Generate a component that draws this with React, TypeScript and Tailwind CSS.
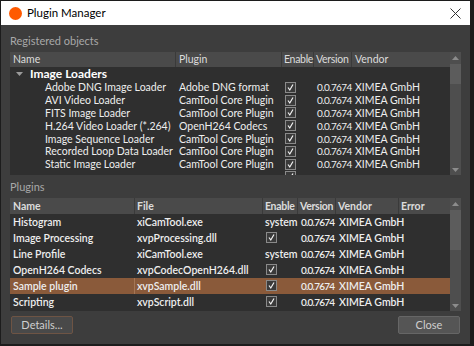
import React from 'react';

const loaders = [
  ['Adobe DNG Image Loader', 'Adobe DNG format'],
  ['AVI Video Loader', 'CamTool Core Plugin'],
  ['FITS Image Loader', 'CamTool Core Plugin'],
  ['H.264 Video Loader (*.264)', 'OpenH264 Codecs'],
  ['Image Sequence Loader', 'CamTool Core Plugin'],
  ['Recorded Loop Data Loader', 'CamTool Core Plugin'],
  ['Static Image Loader', 'CamTool Core Plugin'],
];

const plugins = [
  { name: 'Histogram', file: 'xiCamTool.exe', system: true },
  { name: 'Image Processing', file: 'xvpProcessing.dll', system: false },
  { name: 'Line Profile', file: 'xiCamTool.exe', system: true },
  { name: 'OpenH264 Codecs', file: 'xvpCodecOpenH264.dll', system: false },
  { name: 'Sample plugin', file: 'xvpSample.dll', system: false, selected: true },
  { name: 'Scripting', file: 'xvpScript.dll', system: false },
];

const Check = () => (
  <span className="flex h-[11px] w-[11px] items-center justify-center border border-[#8a8a8a] bg-[#3a3a3a]">
    <svg width="9" height="9" viewBox="0 0 9 9">
      <path d="M2 4.5 L3.8 7 L7 1.5" fill="none" stroke="#f2f2f2" strokeWidth="1.2" />
    </svg>
  </span>
);

const Scrollbar = ({ thumbTop, thumbH }: { thumbTop: number; thumbH: number }) => (
  <div className="relative w-[11px] shrink-0 bg-[#4e4e4e]">
    <div className="flex h-[11px] items-center justify-center">
      <svg width="7" height="4" viewBox="0 0 7 4"><path d="M0 4 L3.5 0 L7 4Z" fill="#8c8c8c" /></svg>
    </div>
    <div className="absolute left-0 right-0 bg-[#5c5c5c]" style={{ top: thumbTop, height: thumbH }} />
    <div className="absolute bottom-0 flex h-[11px] w-full items-center justify-center">
      <svg width="7" height="4" viewBox="0 0 7 4"><path d="M0 0 L3.5 4 L7 0Z" fill="#8c8c8c" /></svg>
    </div>
  </div>
);

const cols1 = 'grid grid-cols-[166px_106px_32px_38px_1fr] whitespace-nowrap';
const cols2 = 'grid grid-cols-[125px_128px_35px_38px_63px_1fr] whitespace-nowrap';

const App: React.FC = () => {
  return (
    <div
      className="flex h-[346px] w-[474px] flex-col overflow-hidden border-r-4 border-b-2 border-l border-t border-[#1c1c1c] bg-[#3d3d3d] text-[10.5px] text-[#eeeeee]"
      style={{ fontFamily: 'Lato, "Liberation Sans", sans-serif' }}
    >
      <div className="flex h-[24px] shrink-0 items-center bg-white pl-[8px] pr-[9px] text-[11.5px] text-black">
        <span className="h-[13px] w-[13px] rounded-full bg-[#ff5a00]" />
        <span className="ml-[5px]">Plugin Manager</span>
        <svg className="ml-auto" width="11" height="11" viewBox="0 0 11 11">
          <path d="M0.5 0.5 L10.5 10.5 M10.5 0.5 L0.5 10.5" stroke="#333" strokeWidth="1" />
        </svg>
      </div>

      <div className="flex flex-1 flex-col px-[9px]">
        <div className="h-[27px] pt-[8px] text-[11px] leading-[16px] text-[#a8a8a8]">Registered objects</div>
        <div className="flex h-[123px] bg-[#2f2f2f]">
          <div className="flex-1 overflow-hidden">
            <div className={`${cols1} h-[15px] bg-[#4a4a4a] text-[10.5px] leading-[15px] text-[#dcdcdc]`}>
              <span className="border-r border-[#3a3a3a] pl-[3px]">Name</span>
              <span className="border-r border-[#3a3a3a] pl-[3px]">Plugin</span>
              <span className="border-r border-[#3a3a3a] pl-[2px] tracking-[-0.3px]">Enable</span>
              <span className="border-r border-[#3a3a3a] pl-[2px] tracking-[-0.3px]">Version</span>
              <span className="pl-[3px]">Vendor</span>
            </div>
            <div className="flex h-[14px] items-center pl-[6px] text-[12px] font-bold leading-[14px] text-white">
              <svg width="7" height="5" viewBox="0 0 7 5"><path d="M0 0 L7 0 L3.5 4Z" fill="#9a9a9a" /></svg>
              <span className="ml-[7px]">Image Loaders</span>
            </div>
            {loaders.map(([n, p]) => (
              <div key={n} className={`${cols1} h-[12.8px] items-center overflow-hidden leading-[12px]`}>
                <span className="pl-[35px]">{n}</span>
                <span className="pl-[3px]">{p}</span>
                <span className="pl-[3px]"><Check /></span>
                <span className="pl-[3px] text-[10px] tracking-[-0.6px]">0.0.7674</span>
                <span className="pl-[3px]">XIMEA GmbH</span>
              </div>
            ))}
            <div className={`${cols1} h-[12.8px] items-center`}>
              <span />
              <span />
              <span className="pl-[3px]"><Check /></span>
            </div>
          </div>
          <Scrollbar thumbTop={12} thumbH={20} />
        </div>

        <div className="h-[23px] pt-[4px] text-[11px] leading-[16px] text-[#a8a8a8]">Plugins</div>
        <div className="flex h-[113px] bg-[#2f2f2f]">
          <div className="flex-1 overflow-hidden font-semibold">
            <div className={`${cols2} h-[16px] bg-[#4a4a4a] font-bold leading-[16px] text-[#dcdcdc]`}>
              <span className="border-r border-[#3a3a3a] pl-[3px]">Name</span>
              <span className="border-r border-[#3a3a3a] pl-[2px]">File</span>
              <span className="border-r border-[#3a3a3a] pl-[2px] tracking-[-0.3px]">Enable</span>
              <span className="border-r border-[#3a3a3a] pl-[2px] tracking-[-0.3px]">Version</span>
              <span className="border-r border-[#3a3a3a] pl-[2px]">Vendor</span>
              <span className="pl-[2px]">Error</span>
            </div>
            {plugins.map((p) => (
              <div
                key={p.name}
                className={`${cols2} h-[16px] items-center leading-[16px] ${p.selected ? 'bg-[#8a5a3a]' : ''}`}
              >
                <span className={`pl-[3px] ${p.selected ? 'border-r border-[#a57655]' : ''}`}>{p.name}</span>
                <span className="pl-[2px]">{p.file}</span>
                <span className="pl-[2px]">{p.system ? 'system' : <span className="ml-[1px] inline-flex"><Check /></span>}</span>
                <span className="pl-[3px] text-[10px] tracking-[-0.8px]">0.0.7674</span>
                <span className="pl-[3px]">XIMEA GmbH</span>
                <span />
              </div>
            ))}
          </div>
          <Scrollbar thumbTop={12} thumbH={40} />
        </div>

        <div className="mt-[5px] flex justify-between px-[1px]">
          <button className="h-[18px] w-[62px] rounded-[2px] border border-[#6e5444] bg-[#494949] text-[11px] leading-[16px] text-[#cfcfcf]">
            Details...
          </button>
          <button className="h-[18px] w-[62px] rounded-[2px] border border-[#666] bg-[#555555] text-[11px] leading-[16px] text-[#cfcfcf]">
            Close
          </button>
        </div>
      </div>
    </div>
  );
};

export default App;
